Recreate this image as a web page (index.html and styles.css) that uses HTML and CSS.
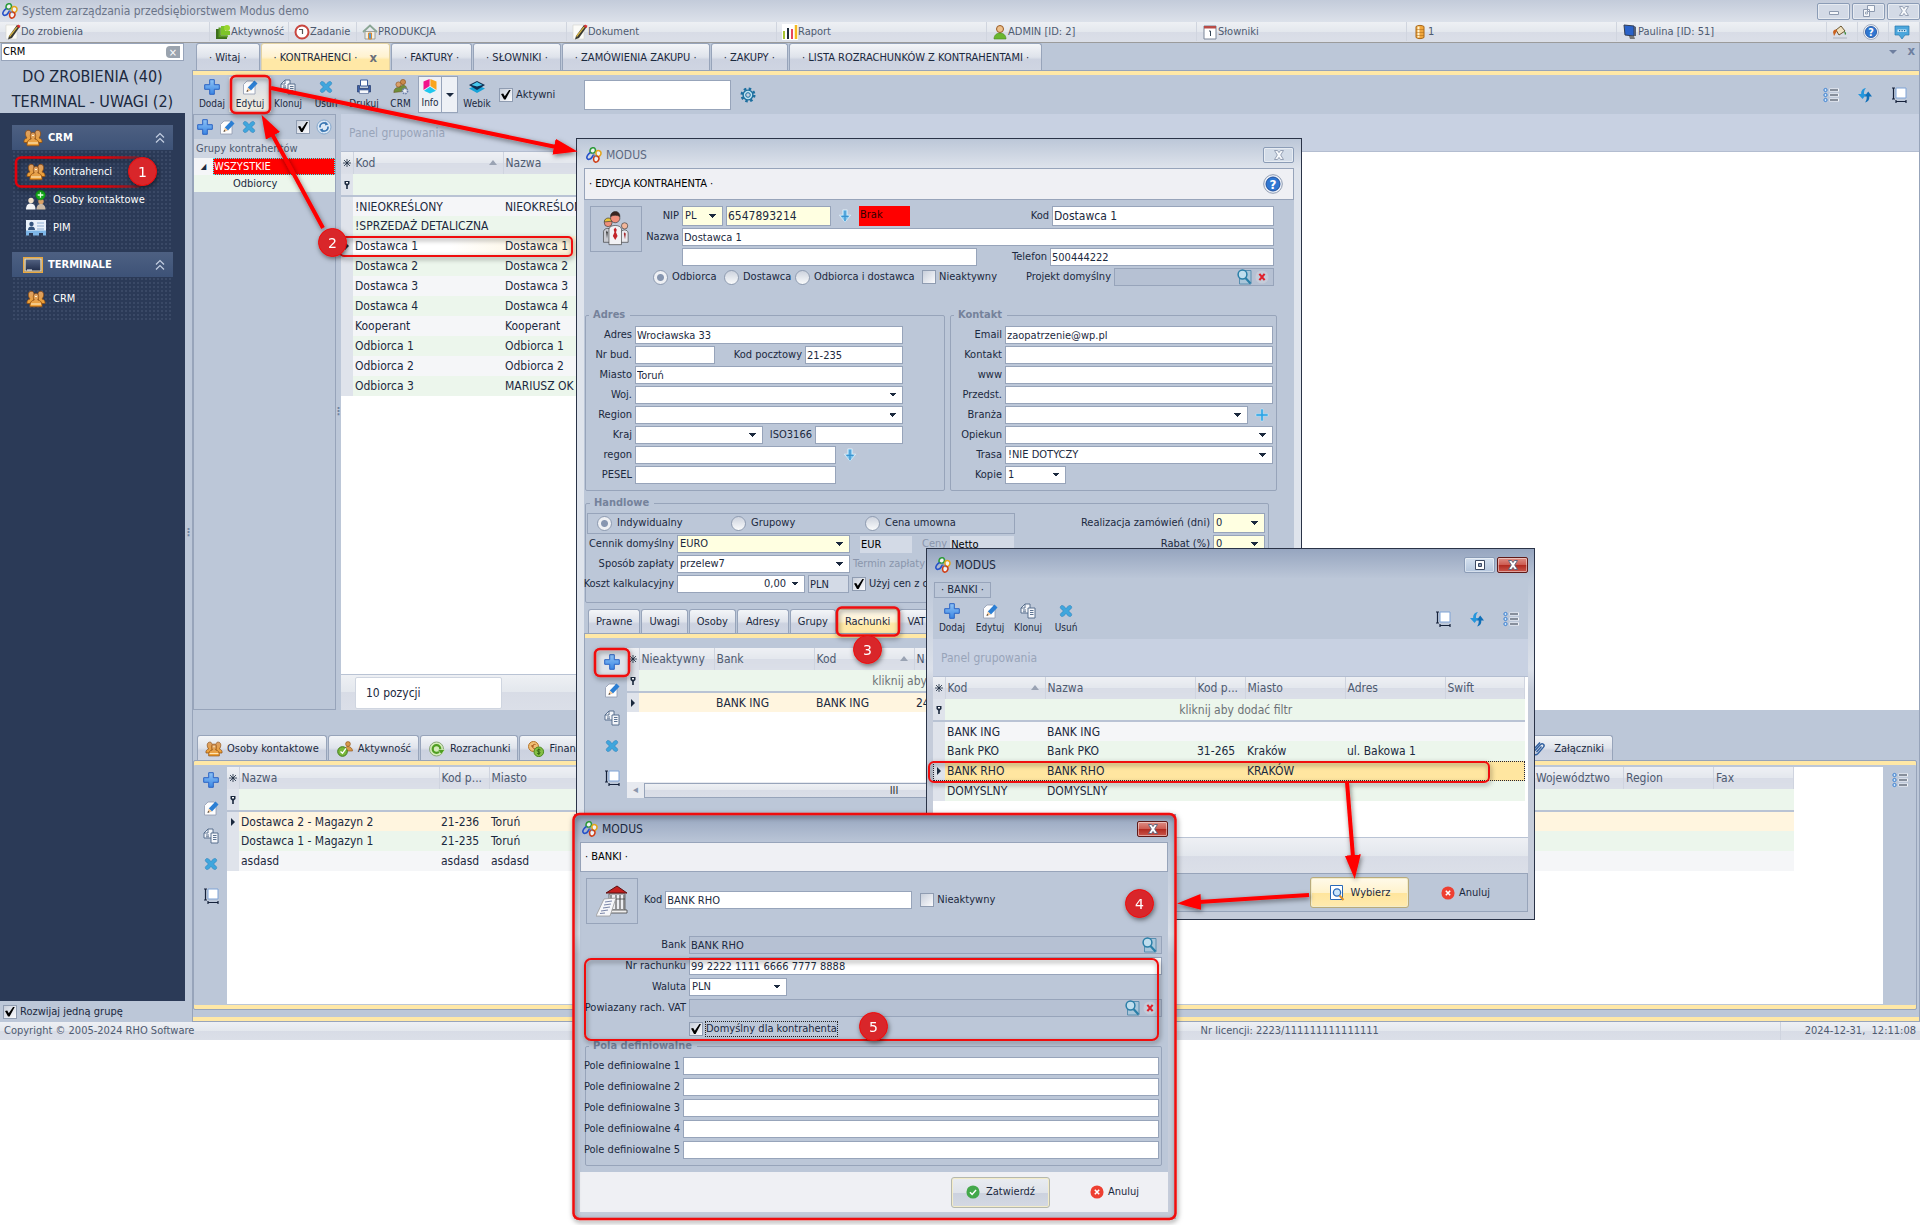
FILE: index.html
```html
<!DOCTYPE html>
<html lang="pl">
<head>
<meta charset="utf-8">
<title>System zarządzania przedsiębiorstwem Modus demo</title>
<link rel="stylesheet" href="styles.css">
</head>
<body>
<svg class="sprite" aria-hidden="true">
  <defs>
    <linearGradient id="gBlue" x1="0" y1="0" x2="0" y2="1"><stop offset="0" stop-color="#8fc3f5"/><stop offset="1" stop-color="#3a86e4"/></linearGradient>
    <linearGradient id="gOrange" x1="0" y1="0" x2="0" y2="1"><stop offset="0" stop-color="#d9a06a"/><stop offset="1" stop-color="#f0a030"/></linearGradient>
    <linearGradient id="gTerm" x1="0" y1="0" x2="0" y2="1"><stop offset="0" stop-color="#5a6a8a"/><stop offset="1" stop-color="#1b2744"/></linearGradient>
  </defs>
  <symbol id="logo" viewBox="0 0 16 16"><g fill="#f1f3f6" stroke-width="1.600"><path d="M4 3.500C4.500.5 8.500-.2 9.300 2.200S8 6.500 6.500 6.300 3.700 5 4 3.500z" stroke="#2e9b3a"/><path d="M4.500 5.500C2.500 6.500.2 9.500 1 11.300s3.500 1.200 4.800-.8L7.500 8" stroke="#2450c8" fill="none"/><path d="M10.500 4.200c1.500-1.300 4.300-.4 4.500 1.600s-1.500 4-3.200 3.600-2.600-3.900-1.300-5.200z" stroke="#e3a51c"/><path d="M8.500 9.500c1.200-1 4.300-.3 4.500 1.700s-1.600 4-3.500 3.900-2.700-4.200-1-5.600z" stroke="#cf3d16"/></g><path d="M6.500 6.500l4 3.500" stroke="#7b86a5" stroke-width="1.200"/></symbol>
  <symbol id="plus" viewBox="0 0 16 16"><path d="M5.700 .7h4.600v5h5v4.600h-5v5H5.700v-5h-5V5.700h5z" fill="url(#gBlue)" stroke="#2a63c4"/></symbol>
  <symbol id="plus2" viewBox="0 0 16 16"><path d="M6.800 2h2.400v4.800H14v2.400H9.200V14H6.800V9.200H2V6.800h4.800z" fill="#2fa5e6" stroke="#d9f1fd" stroke-width=".5"/></symbol>
  <symbol id="edit" viewBox="0 0 16 16"><path d="M5 2h6l2 2v11H1.500V5.500z" fill="#fdfdfe" stroke="#8f9bb0" stroke-width=".8"/><path d="M12.500 1.500l3 3-6.500 7-3.200-3z" fill="#2c7fd4"/><path d="M5.800 8.500 4.500 12.800 9 11.500z" fill="#f0c79a"/><path d="M4.500 12.800l.6-1.900 1.400 1.400z" fill="#222"/></symbol>
  <symbol id="copy" viewBox="0 0 16 16"><g fill="#f4f6fa" stroke="#4d6586" stroke-width=".9"><path d="M5 1h5v9H1V5z"/><path d="M8 5h7v10H8z"/></g><path d="M1 5h4V1M3 7h3M3 8.800h3M10 7.500h3.500M10 9.500h3.500M10 11.500h3.500" stroke="#4d6586" fill="none" stroke-width=".9"/></symbol>
  <symbol id="del" viewBox="0 0 16 16"><path d="M2.500 3.500c1.200-1.800 3-1.200 5.500 2 2.500-3.200 4.300-3.800 5.500-2 .9 1.400-1 2.800-3 4.500 2 1.700 3.900 3.100 3 4.500-1.200 1.800-3 1.200-5.500-2-2.500 3.200-4.300 3.800-5.500 2-.9-1.400 1-2.800 3-4.500-2-1.700-3.900-3.100-3-4.500z" fill="#3fa6dd" stroke="#2a80ba" stroke-width=".6"/></symbol>
  <symbol id="print" viewBox="0 0 16 16"><path d="M4.500 1h7v6h-7z" fill="#fff" stroke="#3a5a9a"/><path d="M1.500 6.500h2v3h9v-3h2V13h-13z" fill="#3b5fa8" stroke="#24396b" stroke-width=".7"/><path d="M3.500 11h9v3.500h-9z" fill="#f5f7fc" stroke="#5a6f96" stroke-width=".7"/></symbol>
  <symbol id="people" viewBox="0 0 20 18"><g fill="url(#gOrange)" stroke="#8c4d13" stroke-width=".8"><path d="M1 13.500c-.5-2.500 1-4 3-4.500C1.500 6 2 1.500 5 1.300S8.500 4 8 9l-1 4.500zM19 13.500c.5-2.500-1-4-3-4.500 2.500-3 2-7.500-1-7.700S11.500 4 12 9l1 4.500z"/><path d="M10 3.500c2.600 0 3.500 3 1.800 6.500 2.700.5 4.700 2.500 4.200 6.800H4c-.5-4.300 1.500-6.300 4.200-6.800C6.500 6.500 7.400 3.500 10 3.500z"/></g><path d="M9 6.500h2M5 14h10" stroke="#fff2cf" stroke-width="1"/></symbol>
  <symbol id="crm" viewBox="0 0 16 16"><circle cx="10" cy="3" r="2.600" fill="#c98a4c" stroke="#8c4d13" stroke-width=".6"/><circle cx="5.500" cy="5.500" r="2.600" fill="#d9a06a" stroke="#8c4d13" stroke-width=".6"/><path d="M.8 13.500c0-3 1.500-5 4.500-5 2 0 3-2.500 5-2.500s3.700 2 3.700 6z" fill="#6f8f3a" stroke="#6b4a1a" stroke-width=".5"/><circle cx="12" cy="12" r="2.600" fill="#e8ebf2" stroke="#6a7ea8" stroke-width="1.600" stroke-dasharray="1.500 .8"/></symbol>
  <symbol id="cube" viewBox="0 0 16 16"><path d="M7.600 1v7L1.500 12V3.500z" fill="#f0138b"/><path d="M8.400 1l6.100 2.500V12L8.400 8z" fill="#f9a51f"/><path d="M8 8.800l6 4L8 15.500l-6-2.700z" fill="#20c8ee"/></symbol>
  <symbol id="webik" viewBox="0 0 16 16"><path d="M0 9.500l8-3.500 8 3.500L8 14z" fill="#15a2d8"/><path d="M0 6l8-4 8 4-8 5z" fill="#0d2d52"/><path d="M2.500 6 8 3l5.500 3L8 7.500z" fill="#48c7ee"/></symbol>
  <symbol id="gear" viewBox="0 0 16 16"><circle cx="8" cy="8" r="6.300" fill="none" stroke="#1d6f9f" stroke-width="2.400" stroke-dasharray="2.500 2.440"/><circle cx="8" cy="8" r="4.900" fill="#bfe4f2" stroke="#1d6f9f" stroke-width="1.400"/><circle cx="8" cy="8" r="2.300" fill="#c6d0e0" stroke="#1d6f9f"/></symbol>
  <symbol id="list" viewBox="0 0 16 16"><path d="M6.500 3H16M6.500 8H16M6.500 13H16" stroke="#f4f6fa" stroke-width="2.800"/><path d="M7 3h8M7 8h8M7 13h8" stroke="#1b293e" stroke-width="1.200"/><g fill="#cfe6fb" stroke="#3b7fd0"><circle cx="2.500" cy="3" r="1.600"/><circle cx="2.500" cy="8" r="1.600"/><circle cx="2.500" cy="13" r="1.600"/></g></symbol>
  <symbol id="sync" viewBox="0 0 16 16"><path d="M9 1C5.500 1.500 4 4 4.200 7H1l4.600 5L9.500 7H7C6.800 4.500 7.500 2.500 9 1z" fill="#2596dc"/><path d="M8 15.500c3-.5 4.600-3 4.300-6H15l-3.800-5L7.500 9.500h2.200c.2 2.500-.5 4.500-1.700 6z" fill="#0f6fb8"/></symbol>
  <symbol id="fit" viewBox="0 0 16 16"><path d="M5 1h10v10H5z" fill="#fff" stroke="#7fa3d6"/><path d="M1 1h3M1 12h3M2.500 1v11M5 14.500h10M5 13v3M15 13v3" stroke="#15213a" fill="none" stroke-width="1.200"/></symbol>
  <symbol id="pencil" viewBox="0 0 16 16"><path d="M1 1h11v14H1z" fill="#fbfbf8" stroke="#d4d3cc" stroke-width=".6"/><path d="M12 1l3 1.500L7 14l-4 1.500L4 12z" fill="#3a3a32"/><path d="M13 .5l2.500 1.200L14.500 4l-2.700-1.400z" fill="#d33"/><path d="M4 12l7.500-9.300 1.200.6L5 13z" fill="#d8b646"/></symbol>
  <symbol id="act" viewBox="0 0 16 16"><path d="M6 2h4v5h5v4H6z" fill="#7cc42a"/><path d="M1 5h3v7h8v3H1z" fill="#3d6f1c"/><path d="M3.500 3.500h2.300v7.700h7v2H3.500z" fill="#5a9a24"/><circle cx="12" cy="4" r="3" fill="#9ad62e"/></symbol>
  <symbol id="clock" viewBox="0 0 16 16"><circle cx="8" cy="8" r="6.500" fill="#fff" stroke="#c9463f" stroke-width="2"/><path d="M5 5.500h3.500V10" fill="none" stroke="#555" stroke-width="1.200"/></symbol>
  <symbol id="house" viewBox="0 0 16 16"><path d="M3 7.500h10V15H3z" fill="#f2efe4" stroke="#8b8f88" stroke-width=".8"/><path d="M1 8l7-6.500L15 8" fill="none" stroke="#8aa694" stroke-width="1.800"/><path d="M6.500 9h3v6h-3z" fill="#4f9bd8" stroke="#e08a2e"/></symbol>
  <symbol id="chart" viewBox="0 0 16 16"><path d="M0 0h16v16H0z" fill="#fff"/><path d="M2 7v8" stroke="#a8c432" stroke-width="2"/><path d="M6 4v11" stroke="#1f2d3a" stroke-width="2"/><path d="M10 5v10" stroke="#e7455c" stroke-width="2"/><path d="M14 1v14" stroke="#f4b91e" stroke-width="2.500"/></symbol>
  <symbol id="user" viewBox="0 0 16 16"><circle cx="8" cy="5" r="3.500" fill="#edc08b" stroke="#9a5a24"/><path d="M2 15c0-4 3-6 6-6s6 2 6 6z" fill="#69b62f" stroke="#4a8a1e" stroke-width=".6"/></symbol>
  <symbol id="cal" viewBox="0 0 16 16"><path d="M2 2h12v13H2z" fill="#fff" stroke="#7c8799"/><path d="M2 2h12v2.500H2z" fill="#b84b46"/><path d="M7 7h1.500v5" stroke="#345" fill="none"/></symbol>
  <symbol id="db" viewBox="0 0 16 16"><path d="M4 2.500c2-1.500 6-1.500 8 0v11c-2 1.500-6 1.500-8 0z" fill="#f0a63c" stroke="#a9681a"/><path d="M6.500 2.500v11" stroke="#fff3cf" stroke-width="2"/><path d="M4 5.500h8M4 8.500h8M4 11.500h8" stroke="#a9681a" stroke-width=".5"/></symbol>
  <symbol id="monitor" viewBox="0 0 16 16"><path d="M2 1l10 1v10L3 11z" fill="#2a62c9" stroke="#333d52"/><path d="M12 2l2 1v9l-2 0z" fill="#555f75"/><path d="M7 12h5l1 3H8z" fill="#777"/></symbol>
  <symbol id="paint" viewBox="0 0 16 16"><path d="M4 6l5-4 4 5-6 4z" fill="#efe1c1" stroke="#6a5530"/><path d="M1 8c1-3 4-3 4-1l-3 5z" fill="#c9621f"/><path d="M12 7c2 1 3 3 1 4z" fill="#3a8a3a"/><path d="M1 13h14v2H1z" fill="#c3c8d2"/></symbol>
  <symbol id="help" viewBox="0 0 20 20"><circle cx="10" cy="10" r="9.300" fill="#eef2f8" stroke="#8e9ab0"/><circle cx="10" cy="10" r="7" fill="#2f77d1" stroke="#1f4f9e"/><text x="10" y="14.500" text-anchor="middle" class="qmark">?</text></symbol>
  <symbol id="chat" viewBox="0 0 16 16"><path d="M1 2h14v9h-4l-3 4-3-4H1z" fill="#4ba6dc" stroke="#2a7ab0" stroke-width=".7"/><path d="M3.500 5.500h9v2.500h-9z" fill="#cfe9f8"/><path d="M5 6.700h1.200M7.500 6.700h1.200M10 6.700h1.200" stroke="#1c5d8c" stroke-width="1.300"/></symbol>
  <symbol id="term" viewBox="0 0 20 16"><path d="M.7.7h18.600v14.600H.7z" fill="url(#gTerm)" stroke="#e9a83e" stroke-width="1.400"/><path d="M2 2h16v12H2z" fill="none" stroke="#fbe9c0" stroke-width="1.200"/><path d="M4 13h5" stroke="#fff"/></symbol>
  <symbol id="contact" viewBox="0 0 20 20"><circle cx="5" cy="10.500" r="2.700" fill="#f3e1c8"/><path d="M0 19.500c0-4.500 2-6 5-6s4.500 2 4.500 6z" fill="#f2f3f5"/><circle cx="15" cy="11.500" r="2.700" fill="#d9a066"/><path d="M10.500 19.500c0-4 2-5.500 4.500-5.500s4.500 2 4.500 5.500z" fill="#c9b9a6"/><circle cx="14.500" cy="5" r="4.800" fill="#12a818" stroke="#0c7a1b" stroke-width=".6"/><path d="M14.500 2.200v5.600M11.700 5h5.600" stroke="#e6ffe2" stroke-width="1.300"/></symbol>
  <symbol id="card" viewBox="0 0 20 16"><path d="M0 0h20v12H0z" fill="#e9f1fa"/><path d="M0 10.500h20v5h-3v-2.500h-4v2.500H7v-2.500H3v2.500H0z" fill="#7db6e8"/><circle cx="5.500" cy="4" r="2.200" fill="#35557e"/><path d="M2 10c0-2.500 1.500-3.500 3.500-3.500s3.500 1 3.500 3.500z" fill="#35557e"/><path d="M11 3h7M11 6h7M11 9h7" stroke="#8fb0d4"/></symbol>
  <symbol id="chev" viewBox="0 0 10 12"><path d="M1 5.500l4-4 4 4M1 10.500l4-4 4 4" fill="none" stroke="#c4cfe2" stroke-width="1.200"/></symbol>
  <symbol id="ok" viewBox="0 0 16 16"><circle cx="8" cy="8" r="7.500" fill="#43a84a"/><path d="M4.500 8.200l2.500 2.500 4.500-5" fill="none" stroke="#fff" stroke-width="1.600"/></symbol>
  <symbol id="cancel" viewBox="0 0 16 16"><circle cx="8" cy="8" r="7.500" fill="#ee3f31"/><path d="M5.500 5.500l5 5M10.500 5.500l-5 5" stroke="#fff" stroke-width="1.800"/></symbol>
  <symbol id="find" viewBox="0 0 16 16"><path d="M5 1.500h10V15H3.500V9" fill="#a9c6da" stroke="#5a8fb0"/><circle cx="6.500" cy="5.500" r="4.400" fill="#c4e3f2" fill-opacity=".8" stroke="#2a7fa8" stroke-width="1.500"/><path d="M9.500 9l5 5.500" stroke="#2a7fa8" stroke-width="2.200"/></symbol>
  <symbol id="pick" viewBox="0 0 16 16"><path d="M1.500.5h12v14h-12z" fill="#fff" stroke="#2869b8"/><circle cx="8" cy="7.500" r="3.600" fill="#cbe6fb" stroke="#2869b8" stroke-width="1.300"/><path d="M10.500 10.500l4 4.500" stroke="#e0912a" stroke-width="2"/></symbol>
  <symbol id="redx" viewBox="0 0 16 16"><circle cx="8" cy="8" r="7.500" fill="#c5ccd9"/><path d="M5 4.500l6 7M11 4.500l-6 7" stroke="#e0202a" stroke-width="2.400"/></symbol>
  <symbol id="clip" viewBox="0 0 16 16"><path d="M4 9.500l5.500-6c2-2 4.800.4 3 2.600L7 12.500c-3 3-7.500-.5-4.500-4L9 1.500" fill="none" stroke="#2f5f9f" stroke-width="1.400"/><path d="M5.500 11l5-5.500" stroke="#2f5f9f" stroke-width="1.300"/></symbol>
  <symbol id="rozr" viewBox="0 0 16 16"><circle cx="7.500" cy="8" r="7" fill="#d4ecb9" stroke="#8aa77b"/><circle cx="7.500" cy="8" r="3.800" fill="none" stroke="#4f9e22" stroke-width="2.200"/><path d="M8.500 8.500H16l-3.700 5z" fill="#4f9e22" stroke="#e7f5d8" stroke-width=".6"/></symbol>
  <symbol id="fin" viewBox="0 0 16 16"><circle cx="5.500" cy="5.500" r="5" fill="#f0be74" stroke="#b5742a"/><path d="M7.500 3.500c-4-1-4 5 0 4M3 5h3" fill="none" stroke="#a5541a"/><circle cx="10.800" cy="10.800" r="4.800" fill="#85bf45" stroke="#4b8a1f"/><path d="M12.500 9c-4-1.500-4 1.500-1.800 1.800s2 2.600-1.600 1.700M10.800 7.500v6.600" fill="none" stroke="#2d5c10" stroke-width=".9"/></symbol>
  <symbol id="aktyw" viewBox="0 0 16 16"><circle cx="11" cy="3" r="2.400" fill="#d99a4c" stroke="#8c4d13" stroke-width=".6"/><path d="M7 10c0-3 2-4.500 4-4.500s4.500 1.500 4.500 4.500z" fill="#d99a4c" stroke="#8c4d13" stroke-width=".6"/><circle cx="5.500" cy="10.500" r="4.800" fill="#79b83a" stroke="#3f7a18"/><path d="M3.500 10.500l2 1.800 3.500-5" fill="none" stroke="#fff" stroke-width="1.400"/></symbol>
  <symbol id="down" viewBox="0 0 14 16"><path d="M4.500 1h5v6H13.500L7 15 .5 7h4z" fill="#7cc4ee" stroke="#e9f6fd" stroke-width=".8"/><path d="M7 2v12M3 8.500h8" stroke="#3a93cf" stroke-width="1.400"/></symbol>
  <symbol id="refresh" viewBox="0 0 16 16"><circle cx="8" cy="8" r="7" fill="#dce9f6" stroke="#86a9cd"/><path d="M4 8.500a4 4 0 0 1 6.500-3.700M12 7.500a4 4 0 0 1-6.500 3.700" fill="none" stroke="#3b78b4" stroke-width="1.600"/><path d="M9.500 2.500l3 3-3.500 1zM6.500 13.500l-3-3 3.500-1z" fill="#3b78b4"/></symbol>
  <symbol id="trio" viewBox="0 0 32 46"><g stroke="#333" stroke-width=".8"><circle cx="6" cy="15" r="5" fill="#f08f7c"/><path d="M1 14c0-6 9-7 10-1z" fill="#e8c63a"/><path d="M0 40V26c1-5 10-5 11 0v14z" fill="#c9cbd2"/><circle cx="27" cy="19" r="4" fill="#f2b79c"/><path d="M22 40V28c1-5 9-5 9.500 0v12z" fill="#e9e9ee"/><circle cx="15" cy="9" r="6" fill="#f08f7c"/><path d="M9 7c0-8 12-9 12 0-4-2-8-2-12 0z" fill="#3a2420"/><path d="M7 43V23c1-6 15-6 16 0v20z" fill="#f2f2f5"/></g><path d="M15 21l2 3-1 3 2 5-3 5-3-5 2-5-1-3z" fill="#c3242a"/><path d="M4 25l1.500 2-1 8-1-8z" fill="#333"/><path d="M27 27l1.500 2-1 7-1.500-7z" fill="#a32a2e"/></symbol>
  <symbol id="bank" viewBox="0 0 32 32"><path d="M13 9h16v16H13z" fill="#eceef2" stroke="#555" stroke-width=".8"/><path d="M10 8 21 1l10 7z" fill="#c4201f" stroke="#5c1010"/><path d="M15 10v14M20 10v14M24 10v14M28 10v14" stroke="#666" stroke-width="1.300"/><path d="M13 14h16M11 25h20v3H11z" stroke="#444" fill="#eee" stroke-width=".8"/><path d="M8 14l12-1-6 18H0z" fill="#f6f7fa" stroke="#999" stroke-width=".8"/><path d="M9 17l7-1M8 20l7-1M7 23l7-1M5 26l7-1M4 28.500l5-.5" stroke="#7b86a8" stroke-width="1.100"/></symbol>
  <symbol id="wx" viewBox="0 0 12 12"><path d="M1.500 1.500h3L6 3.600l1.500-2.100h3L7.700 6l2.800 4.500h-3L6 8.400l-1.500 2.100h-3L4.300 6z" fill="#fff" stroke="#51607a" stroke-width=".9"/></symbol>
  <symbol id="wxoff" viewBox="0 0 12 12"><path d="M1.500 1.500h3L6 3.600l1.500-2.100h3L7.700 6l2.800 4.500h-3L6 8.400l-1.500 2.100h-3L4.300 6z" fill="#f6f8fb" stroke="#8c99ae" stroke-width=".9"/></symbol>
  <symbol id="wmin" viewBox="0 0 12 12"><path d="M1.500 6.500h9v3h-9z" fill="#f6f8fb" stroke="#8c99ae"/></symbol>
  <symbol id="wmax" viewBox="0 0 12 12"><path d="M1.500 1.500h9v9h-9z" fill="#fff" stroke="#3c4a63"/><path d="M4.500 4.500h3v3h-3z" fill="#8fa0bb" stroke="#3c4a63"/></symbol>
  <symbol id="wres" viewBox="0 0 12 12"><path d="M4.500.5h7v6h-7zM.5 4.500h6v7h-6z" fill="#f6f8fb" stroke="#8c99ae"/><path d="M2.500 7h2v2h-2z" fill="none" stroke="#8c99ae" stroke-width=".8"/></symbol>
  <symbol id="star" viewBox="0 0 8 8"><path d="M4 0v8M0 4h8M1 1l6 6M7 1 1 7" stroke="#1b293e" stroke-width=".8"/></symbol>
  <symbol id="pin" viewBox="0 0 8 8"><path d="M1.500 0h5v3L4.800 4.500V8H3.200V4.500L1.500 3z" fill="#1b293e"/><path d="M3 1h2v1.500H3z" fill="#fff"/></symbol>
  <symbol id="cur" viewBox="0 0 8 8"><path d="M2 0l4 4-4 4z" fill="#1b293e"/></symbol>
  <symbol id="sort" viewBox="0 0 8 5"><path d="M4 0l4 5H0z" fill="#9aa3b3"/></symbol>
</svg>

<div class="app">
  <header class="titlebar">
    <svg class="i16"><use href="#logo"/></svg><h1>System zarządzania przedsiębiorstwem Modus demo</h1>
    <div class="winbtns">
      <button class="wb wide" aria-label="Minimalizuj"><svg class="i12"><use href="#wmin"/></svg></button>
      <button class="wb wide" aria-label="Przywróć"><svg class="i12"><use href="#wres"/></svg></button>
      <button class="wb wide" aria-label="Zamknij"><svg class="i12"><use href="#wxoff"/></svg></button>
    </div>
  </header>
  <nav class="menubar">
    <a href="#" class="m-grow"><svg class="i16"><use href="#pencil"/></svg>Do zrobienia</a>
    <a href="#" class="m-79"><svg class="i16"><use href="#act"/></svg>Aktywność</a>
    <a href="#" class="m-68"><svg class="i16"><use href="#clock"/></svg>Zadanie</a>
    <a href="#" class="m-grow"><svg class="i16"><use href="#house"/></svg>PRODUKCJA</a>
    <a href="#" class="m-grow"><svg class="i16"><use href="#pencil"/></svg>Dokument</a>
    <a href="#" class="m-grow"><svg class="i16"><use href="#chart"/></svg>Raport</a>
    <a href="#" class="m-grow"><svg class="i16"><use href="#user"/></svg>ADMIN [ID: 2]</a>
    <a href="#" class="m-grow"><svg class="i16"><use href="#cal"/></svg>Słowniki</a>
    <a href="#" class="m-grow"><svg class="i16"><use href="#db"/></svg>1</a>
    <a href="#" class="m-grow"><svg class="i16"><use href="#monitor"/></svg>Paulina [ID: 51]</a>
    <a href="#" class="m-30" aria-label="Skórka"><svg class="i16"><use href="#paint"/></svg></a>
    <a href="#" class="m-30" aria-label="Pomoc"><svg class="i16"><use href="#help"/></svg></a>
    <a href="#" class="m-30" aria-label="Wiadomości"><svg class="i16"><use href="#chat"/></svg></a>
  </nav>

  <div class="shell">
    <aside class="side">
      <div class="searchbox"><input type="text" value="CRM" aria-label="Szukaj"><button aria-label="Wyczyść">×</button></div>
      <a href="#" class="todo">DO ZROBIENIA (40)</a>
      <a href="#" class="todo">TERMINAL - UWAGI (2)</a>
      <nav class="navpanel">
        <section>
          <h2><svg class="i20"><use href="#people"/></svg>CRM<svg class="chev"><use href="#chev"/></svg></h2>
          <ul>
            <li><a href="#"><svg class="i20"><use href="#people"/></svg>Kontrahenci</a></li>
            <li><a href="#"><svg class="i20"><use href="#contact"/></svg>Osoby kontaktowe</a></li>
            <li><a href="#"><svg class="i20"><use href="#card"/></svg>PIM</a></li>
          </ul>
        </section>
        <section>
          <h2><svg class="i20"><use href="#term"/></svg>TERMINALE<svg class="chev"><use href="#chev"/></svg></h2>
          <ul>
            <li><a href="#"><svg class="i20"><use href="#people"/></svg>CRM</a></li>
          </ul>
        </section>
      </nav>
      <label class="chk sidechk"><input type="checkbox" checked>Rozwijaj jedną grupę</label>
    </aside>
    <div class="vsplit">⋮</div>

    <main class="work">
      <div class="tabs maintabs">
        <button class="tab">· Witaj ·</button>
        <button class="tab on">· KONTRAHENCI ·<b>x</b></button>
        <button class="tab">· FAKTURY ·</button>
        <button class="tab">· SŁOWNIKI ·</button>
        <button class="tab">· ZAMÓWIENIA ZAKUPU ·</button>
        <button class="tab">· ZAKUPY ·</button>
        <button class="tab">· LISTA ROZRACHUNKÓW Z KONTRAHENTAMI ·</button>
        <span class="tabctl"><i></i><b>x</b></span>
      </div>
      <div class="page">
        <div class="toolbar">
          <button class="tool"><svg class="i16"><use href="#plus"/></svg>Dodaj</button>
          <button class="tool hot"><svg class="i16"><use href="#edit"/></svg>Edytuj</button>
          <button class="tool"><svg class="i16"><use href="#copy"/></svg>Klonuj</button>
          <button class="tool"><svg class="i16"><use href="#del"/></svg>Usuń</button>
          <button class="tool"><svg class="i16"><use href="#print"/></svg>Drukuj</button>
          <button class="tool narrow"><svg class="i16"><use href="#crm"/></svg>CRM</button>
          <div class="infobox"><button class="tool"><svg class="i16"><use href="#cube"/></svg>Info</button><button class="drop" aria-label="Więcej"><i></i></button></div>
          <button class="tool"><svg class="i16"><use href="#webik"/></svg>Webik</button>
          <label class="chk"><input type="checkbox" checked>Aktywni</label>
          <input class="quick" type="text" aria-label="Szukaj na liście">
          <button class="ico" aria-label="Ustawienia"><svg class="i16"><use href="#gear"/></svg></button>
          <span class="tools-r">
            <button class="ico" aria-label="Widok"><svg class="i16"><use href="#list"/></svg></button>
            <button class="ico" aria-label="Odśwież"><svg class="i16"><use href="#sync"/></svg></button>
            <button class="ico" aria-label="Dopasuj"><svg class="i16"><use href="#fit"/></svg></button>
          </span>
        </div>
        <div class="upper">
          <div class="tree">
            <div class="treebar">
              <button class="ico" aria-label="Dodaj grupę"><svg class="i16"><use href="#plus"/></svg></button>
              <button class="ico" aria-label="Edytuj grupę"><svg class="i16"><use href="#edit"/></svg></button>
              <button class="ico" aria-label="Usuń grupę"><svg class="i16"><use href="#del"/></svg></button>
              <label class="chk push"><input type="checkbox" checked aria-label="Pokaż grupy"></label>
              <button class="ico" aria-label="Odśwież grupy"><svg class="i16"><use href="#refresh"/></svg></button>
            </div>
            <div class="treehead">Grupy kontrahentów</div>
            <ul class="treelist"><li class="root"><i>◢</i><span>WSZYSTKIE</span></li><li class="leaf">Odbiorcy</li></ul>
          </div>
          <div class="vsplit slim">⋮</div>
          <div class="gridbox">
            <div class="grouppanel">Panel grupowania</div>
            <div class="gridwrap">
              <table class="grid t-main">
                <colgroup><col class="c12"><col class="c150"><col></colgroup>
                <thead>
                  <tr><th><svg class="i8"><use href="#star"/></svg></th><th>Kod<svg class="sort"><use href="#sort"/></svg></th><th>Nazwa</th></tr>
                  <tr class="filter"><td><svg class="i8"><use href="#pin"/></svg></td><td colspan="2"></td></tr>
                </thead>
                <tbody>
                  <tr><td></td><td>!NIEOKREŚLONY</td><td>NIEOKREŚLONY</td></tr>
                  <tr><td></td><td>!SPRZEDAŻ DETALICZNA</td><td></td></tr>
                  <tr class="cursel"><td><svg class="i8"><use href="#cur"/></svg></td><td>Dostawca 1</td><td>Dostawca 1</td></tr>
                  <tr><td></td><td>Dostawca 2</td><td>Dostawca 2</td></tr>
                  <tr><td></td><td>Dostawca 3</td><td>Dostawca 3</td></tr>
                  <tr><td></td><td>Dostawca 4</td><td>Dostawca 4</td></tr>
                  <tr><td></td><td>Kooperant</td><td>Kooperant</td></tr>
                  <tr><td></td><td>Odbiorca 1</td><td>Odbiorca 1</td></tr>
                  <tr><td></td><td>Odbiorca 2</td><td>Odbiorca 2</td></tr>
                  <tr><td></td><td>Odbiorca 3</td><td>MARIUSZ OK</td></tr>
                </tbody>
              </table>
            </div>
            <div class="gridfoot t-main"><output>10 pozycji</output></div>
          </div>
        </div>
        <div class="lower">
          <div class="tabs lowtabs">
            <button class="tab"><svg class="i18"><use href="#people"/></svg>Osoby kontaktowe</button>
            <button class="tab"><svg class="i18"><use href="#aktyw"/></svg>Aktywność</button>
            <button class="tab"><svg class="i18"><use href="#rozr"/></svg>Rozrachunki</button>
            <button class="tab"><svg class="i18"><use href="#fin"/></svg>Finanse</button>
            <button class="tab last"><svg class="i18"><use href="#clip"/></svg>Załączniki</button>
          </div>
          <div class="lowpane">
            <div class="vtools">
              <button class="ico" aria-label="Dodaj"><svg class="i16"><use href="#plus"/></svg></button>
              <button class="ico" aria-label="Edytuj"><svg class="i16"><use href="#edit"/></svg></button>
              <button class="ico" aria-label="Klonuj"><svg class="i16"><use href="#copy"/></svg></button>
              <button class="ico" aria-label="Usuń"><svg class="i16"><use href="#del"/></svg></button>
              <button class="ico" aria-label="Dopasuj"><svg class="i16"><use href="#fit"/></svg></button>
            </div>
            <div class="gridwrap">
              <table class="grid t-low">
                <colgroup><col class="c12"><col class="c200"><col class="c50"><col><col class="c90"><col class="c90"><col class="c80"></colgroup>
                <thead>
                  <tr><th><svg class="i8"><use href="#star"/></svg></th><th>Nazwa</th><th>Kod p...</th><th>Miasto</th><th>Województwo</th><th>Region</th><th>Fax</th></tr>
                  <tr class="filter"><td><svg class="i8"><use href="#pin"/></svg></td><td colspan="6"></td></tr>
                </thead>
                <tbody>
                  <tr class="cur"><td><svg class="i8"><use href="#cur"/></svg></td><td>Dostawca 2 - Magazyn 2</td><td>21-236</td><td>Toruń</td><td></td><td></td><td></td></tr>
                  <tr><td></td><td>Dostawca 1 - Magazyn 1</td><td>21-235</td><td>Toruń</td><td></td><td></td><td></td></tr>
                  <tr><td></td><td>asdasd</td><td>asdasd</td><td>asdasd</td><td></td><td></td><td></td></tr>
                </tbody>
              </table>
            </div>
            <div class="vtools"><button class="ico" aria-label="Widok"><svg class="i16"><use href="#list"/></svg></button></div>
          </div>
        </div>
      </div>
    </main>
  </div>
  <footer class="status"><span>Copyright © 2005-2024 RHO Software</span><span>Nr licencji: 2223/111111111111111</span><span class="when">2024-12-31,&nbsp; 12:11:08</span></footer>
</div>

<section class="win w-edit">
  <header class="wtitle"><svg class="i16"><use href="#logo"/></svg>MODUS<span class="winbtns"><button class="wb" aria-label="Zamknij"><svg class="i12"><use href="#wxoff"/></svg></button></span></header>
  <div class="whead"><span>· EDYCJA KONTRAHENTA ·</span><button class="ico" aria-label="Pomoc"><svg class="i20"><use href="#help"/></svg></button></div>
  <form class="wbody">
    <div class="idblock">
      <div class="pic"><svg class="trio"><use href="#trio"/></svg></div>
      <div class="rows">
        <div class="row tall"><label class="lb w38" for="nip">NIP</label><select class="w41 yl" aria-label="Kraj NIP"><option>PL</option></select><input id="nip" class="w104 yl big" type="text" value="6547893214"><button type="button" class="ico mid" aria-label="Pobierz dane"><svg class="i14"><use href="#down"/></svg></button><span class="brak">Brak</span><label class="lb push" for="kod">Kod</label><input id="kod" class="w222 big" type="text" value="Dostawca 1"></div>
        <div class="row"><label class="lb w38" for="nazwa">Nazwa</label><input id="nazwa" class="fill" type="text" value="Dostawca 1"></div>
        <div class="row"><span class="lb w38"></span><input class="w294" type="text" aria-label="Nazwa cd."><label class="lb push" for="tel">Telefon</label><input id="tel" class="w224" type="text" value="500444222"></div>
        <div class="row kinds"><label class="rad w71"><input type="radio" name="typ" checked>Odbiorca</label><label class="rad w71"><input type="radio" name="typ">Dostawca</label><label class="rad w126"><input type="radio" name="typ">Odbiorca i dostawca</label><label class="chk"><input type="checkbox">Nieaktywny</label><label class="lb push" for="proj">Projekt domyślny</label><span class="lookup w160"><input id="proj" type="text" readonly><svg class="i16"><use href="#find"/></svg><svg class="i14"><use href="#redx"/></svg></span></div>
      </div>
    </div>
    <div class="pair">
      <fieldset class="f-adr"><legend>Adres</legend>
        <div class="row"><label class="lb w46" for="a1">Adres</label><input id="a1" class="fill" type="text" value="Wrocławska 33"></div>
        <div class="row"><label class="lb w46" for="a2">Nr bud.</label><input id="a2" class="w80" type="text"><label class="lb push" for="a3">Kod pocztowy</label><input id="a3" class="w98" type="text" value="21-235"></div>
        <div class="row"><label class="lb w46" for="a4">Miasto</label><input id="a4" class="fill" type="text" value="Toruń"></div>
        <div class="row"><label class="lb w46" for="a5">Woj.</label><select id="a5" class="fill"><option></option></select></div>
        <div class="row"><label class="lb w46" for="a6">Region</label><select id="a6" class="fill"><option></option></select></div>
        <div class="row"><label class="lb w46" for="a7">Kraj</label><select id="a7" class="w128"><option></option></select><label class="lb push" for="a8">ISO3166</label><input id="a8" class="w88" type="text"></div>
        <div class="row"><label class="lb w46" for="a9">regon</label><input id="a9" class="w201" type="text"><button type="button" class="ico mid" aria-label="Pobierz z REGON"><svg class="i14"><use href="#down"/></svg></button></div>
        <div class="row"><label class="lb w46" for="a10">PESEL</label><input id="a10" class="w201" type="text"></div>
      </fieldset>
      <fieldset class="f-kon"><legend>Kontakt</legend>
        <div class="row"><label class="lb w51" for="k1">Email</label><input id="k1" class="fill" type="text" value="zaopatrzenie@wp.pl"></div>
        <div class="row"><label class="lb w51" for="k2">Kontakt</label><input id="k2" class="fill" type="text"></div>
        <div class="row"><label class="lb w51" for="k3">www</label><input id="k3" class="fill" type="text"></div>
        <div class="row"><label class="lb w51" for="k4">Przedst.</label><input id="k4" class="fill" type="text"></div>
        <div class="row"><label class="lb w51" for="k5">Branża</label><select id="k5" class="fill"><option></option></select><button type="button" class="ico w22" aria-label="Dodaj branżę"><svg class="i16"><use href="#plus2"/></svg></button></div>
        <div class="row"><label class="lb w51" for="k6">Opiekun</label><select id="k6" class="fill"><option></option></select></div>
        <div class="row"><label class="lb w51" for="k7">Trasa</label><select id="k7" class="fill"><option>!NIE DOTYCZY</option></select></div>
        <div class="row"><label class="lb w51" for="k8">Kopie</label><select id="k8" class="w61"><option>1</option></select></div>
      </fieldset>
    </div>
    <fieldset class="f-han"><legend>Handlowe</legend>
      <div class="row tall"><div class="radbox"><label class="rad"><input type="radio" name="cena" checked>Indywidualny</label><label class="rad"><input type="radio" name="cena">Grupowy</label><label class="rad"><input type="radio" name="cena">Cena umowna</label></div><label class="lb push" for="h1">Realizacja zamówień (dni)</label><select id="h1" class="w52 yl"><option>0</option></select></div>
      <div class="row"><label class="lb w87" for="h2">Cennik domyślny</label><select id="h2" class="w173 yl"><option>EURO</option></select><output class="ro w52 gapl">EUR</output><span class="dim gapl">Ceny</span><output class="ro w64">Netto</output><label class="lb push" for="h3">Rabat (%)</label><select id="h3" class="w52 yl"><option>0</option></select></div>
      <div class="row"><label class="lb w87" for="h4">Sposób zapłaty</label><select id="h4" class="w173"><option>przelew7</option></select><span class="dim">Termin zapłaty</span></div>
      <div class="row"><label class="lb w87" for="h5">Koszt kalkulacyjny</label><select id="h5" class="w128 rt"><option>0,00</option></select><input class="w41 gr" type="text" value="PLN" readonly aria-label="Waluta kosztu"><label class="chk"><input type="checkbox" checked>Użyj cen z c</label></div>
    </fieldset>
    <div class="tabs subtabs">
      <button type="button" class="tab">Prawne</button><button type="button" class="tab">Uwagi</button><button type="button" class="tab">Osoby</button><button type="button" class="tab">Adresy</button><button type="button" class="tab">Grupy</button><button type="button" class="tab on">Rachunki</button><button type="button" class="tab">VAT</button>
    </div>
    <div class="subpane">
      <div class="vtools wide">
        <button type="button" class="ico addhot" aria-label="Dodaj rachunek"><svg class="i16"><use href="#plus"/></svg></button>
        <button type="button" class="ico" aria-label="Edytuj rachunek"><svg class="i16"><use href="#edit"/></svg></button>
        <button type="button" class="ico" aria-label="Klonuj rachunek"><svg class="i16"><use href="#copy"/></svg></button>
        <button type="button" class="ico" aria-label="Usuń rachunek"><svg class="i16"><use href="#del"/></svg></button>
        <button type="button" class="ico" aria-label="Dopasuj"><svg class="i16"><use href="#fit"/></svg></button>
      </div>
      <div class="subgrid">
        <div class="gridwrap">
          <table class="grid t-acc">
            <colgroup><col class="c12"><col class="c75"><col class="c100"><col class="c100"><col></colgroup>
            <thead>
              <tr><th><svg class="i8"><use href="#star"/></svg></th><th>Nieaktywny</th><th>Bank</th><th>Kod<svg class="sort"><use href="#sort"/></svg></th><th>N</th></tr>
              <tr class="filter"><td><svg class="i8"><use href="#pin"/></svg></td><td colspan="4">kliknij aby dodać filtr</td></tr>
            </thead>
            <tbody><tr class="cur"><td><svg class="i8"><use href="#cur"/></svg></td><td></td><td>BANK ING</td><td>BANK ING</td><td>24</td></tr></tbody>
          </table>
        </div>
        <div class="hscroll"><span>◂</span><div class="thumb">III</div></div>
      </div>
    </div>
  </form>
</section>

<section class="win active w-pick">
  <header class="wtitle"><svg class="i16"><use href="#logo"/></svg>MODUS<span class="winbtns"><button class="wb" aria-label="Maksymalizuj"><svg class="i12"><use href="#wmax"/></svg></button><button class="wb red" aria-label="Zamknij"><svg class="i12"><use href="#wx"/></svg></button></span></header>
  <div class="wbody pickbody">
    <span class="chip">· BANKI ·</span>
    <div class="toolbar">
      <button class="tool"><svg class="i16"><use href="#plus"/></svg>Dodaj</button>
      <button class="tool"><svg class="i16"><use href="#edit"/></svg>Edytuj</button>
      <button class="tool"><svg class="i16"><use href="#copy"/></svg>Klonuj</button>
      <button class="tool"><svg class="i16"><use href="#del"/></svg>Usuń</button>
      <span class="tools-r">
        <button class="ico" aria-label="Dopasuj"><svg class="i16"><use href="#fit"/></svg></button>
        <button class="ico" aria-label="Odśwież"><svg class="i16"><use href="#sync"/></svg></button>
        <button class="ico" aria-label="Widok"><svg class="i16"><use href="#list"/></svg></button>
      </span>
    </div>
    <div class="grouppanel">Panel grupowania</div>
    <div class="gridwrap">
      <table class="grid t-bank">
        <colgroup><col class="c12"><col class="c100"><col class="c150"><col class="c50"><col class="c100"><col class="c100"><col></colgroup>
        <thead>
          <tr><th><svg class="i8"><use href="#star"/></svg></th><th>Kod<svg class="sort"><use href="#sort"/></svg></th><th>Nazwa</th><th>Kod p...</th><th>Miasto</th><th>Adres</th><th>Swift</th></tr>
          <tr class="filter"><td><svg class="i8"><use href="#pin"/></svg></td><td colspan="6">kliknij aby dodać filtr</td></tr>
        </thead>
        <tbody>
          <tr><td></td><td>BANK ING</td><td>BANK ING</td><td></td><td></td><td></td><td></td></tr>
          <tr><td></td><td>Bank PKO</td><td>Bank PKO</td><td>31-265</td><td>Kraków</td><td>ul. Bakowa 1</td><td></td></tr>
          <tr class="sel"><td><svg class="i8"><use href="#cur"/></svg></td><td>BANK RHO</td><td>BANK RHO</td><td></td><td>KRAKÓW</td><td></td><td></td></tr>
          <tr><td></td><td>DOMYSLNY</td><td>DOMYSLNY</td><td></td><td></td><td></td><td></td></tr>
        </tbody>
      </table>
    </div>
    <div class="gridfoot"></div>
    <div class="actions"><button class="btn gold"><svg class="i16"><use href="#pick"/></svg>Wybierz</button><button class="btn flat"><svg class="i14"><use href="#cancel"/></svg>Anuluj</button></div>
  </div>
</section>

<section class="win active w-bank">
  <header class="wtitle"><svg class="i16"><use href="#logo"/></svg>MODUS<span class="winbtns"><button class="wb red" aria-label="Zamknij"><svg class="i12"><use href="#wx"/></svg></button></span></header>
  <div class="whead"><span>· BANKI ·</span></div>
  <form class="wbody">
    <div class="bankid">
      <div class="pic"><svg class="bankpic"><use href="#bank"/></svg></div>
      <div class="row"><label class="lb" for="b1">Kod</label><input id="b1" class="w247" type="text" value="BANK RHO"><label class="chk"><input type="checkbox">Nieaktywny</label></div>
    </div>
    <div class="rows21">
      <div class="row"><label class="lb w104" for="b2">Bank</label><span class="lookup fill"><input id="b2" type="text" value="BANK RHO" readonly><svg class="i16"><use href="#find"/></svg></span></div>
      <div class="row"><label class="lb w104" for="b3">Nr rachunku</label><input id="b3" class="fill" type="text" value="99 2222 1111 6666 7777 8888"></div>
      <div class="row"><label class="lb w104" for="b4">Waluta</label><select id="b4" class="w98"><option>PLN</option></select></div>
      <div class="row"><label class="lb w104" for="b5">Powiazany rach. VAT</label><span class="lookup fill"><input id="b5" type="text" readonly><svg class="i16"><use href="#find"/></svg><svg class="i14"><use href="#redx"/></svg></span></div>
      <div class="row"><span class="lb w104"></span><label class="chk focus"><input type="checkbox" checked><span>Domyślny dla kontrahenta</span></label></div>
    </div>
    <fieldset class="f-def"><legend>Pola definiowalne</legend>
      <div class="row"><label class="lb w94" for="p1">Pole definiowalne 1</label><input id="p1" class="fill" type="text"></div>
      <div class="row"><label class="lb w94" for="p2">Pole definiowalne 2</label><input id="p2" class="fill" type="text"></div>
      <div class="row"><label class="lb w94" for="p3">Pole definiowalne 3</label><input id="p3" class="fill" type="text"></div>
      <div class="row"><label class="lb w94" for="p4">Pole definiowalne 4</label><input id="p4" class="fill" type="text"></div>
      <div class="row"><label class="lb w94" for="p5">Pole definiowalne 5</label><input id="p5" class="fill" type="text"></div>
    </fieldset>
  </form>
  <div class="wfoot"><button class="btn"><svg class="i14"><use href="#ok"/></svg>Zatwierdź</button><button class="btn flat"><svg class="i14"><use href="#cancel"/></svg>Anuluj</button></div>
</section>

<!-- tutorial callouts: frames, arrows and step numbers -->
<svg class="notes" width="1920" height="1225">
  <defs>
    <filter id="sh" x="-20%" y="-20%" width="140%" height="150%"><feDropShadow dx="1" dy="2" stdDeviation="2.500" flood-color="#000" flood-opacity=".5"/></filter>
    <marker id="ah" markerUnits="userSpaceOnUse" markerWidth="24" markerHeight="18" refX="2" refY="8" orient="auto"><path d="M0 0l24 8-24 8z" fill="#f00"/></marker>
    <linearGradient id="fade" x1="0" x2="1"><stop offset="0" stop-color="#e00008"/><stop offset=".7" stop-color="#e00008"/><stop offset="1" stop-color="#e00008" stop-opacity=".3"/></linearGradient>
  </defs>
  <g fill="none" stroke="#f00a0a" stroke-width="2.500" filter="url(#sh)">
    <rect x="16" y="157.500" width="126" height="29" rx="5" stroke="url(#fade)"/>
    <rect x="231" y="76" width="39" height="37" rx="5"/>
    <rect x="340" y="237" width="232" height="19" rx="4" stroke-width="2"/>
    <rect x="837" y="607.500" width="62" height="28" rx="5"/>
    <rect x="595" y="649" width="34" height="27" rx="5"/>
    <rect x="929" y="762" width="560" height="20" rx="5" stroke-width="2"/>
    <rect x="573.500" y="814" width="602" height="405" rx="6" stroke-width="2.500"/>
    <rect x="585" y="959" width="573" height="81" rx="6" stroke-width="2"/>
  </g>
  <g stroke="#f00" stroke-width="4" filter="url(#sh)">
    <path d="M271 88 556 147" marker-end="url(#ah)"/>
    <path d="M323 228 272 134" marker-end="url(#ah)"/>
    <path d="M1347 782 1353 857" marker-end="url(#ah)"/>
    <path d="M1309 895 1199 902" marker-end="url(#ah)"/>
  </g>
  <g class="steps" filter="url(#sh)">
    <circle cx="142.500" cy="171.500" r="14"/><text x="142.500" y="177">1</text>
    <circle cx="332.500" cy="242.500" r="14"/><text x="332.500" y="248">2</text>
    <circle cx="867.500" cy="649.500" r="14"/><text x="867.500" y="655">3</text>
    <circle cx="1139.500" cy="903.500" r="14"/><text x="1139.500" y="909">4</text>
    <circle cx="873.500" cy="1026.500" r="14"/><text x="873.500" y="1032">5</text>
  </g>
</svg>
</body>
</html>
```
FILE: styles.css
```css
:root {
  --bg: #bcc7d8;
  --line: #97a4ba;
  --ink: #1b293e;
  --dim: #4e5a70;
  --gold: #ffe8a6;
  --metal: linear-gradient(#eef0f4 0, #e3e7ed 50%, #d8dce6 50%, #dbdfe8 100%);
}
* { box-sizing: border-box; }
body {
  margin: 0;
  position: relative;
  min-height: 100vh;
  background: #fff;
  color: var(--ink);
  font: 11px/14px "DejaVu Sans Condensed", "Noto Sans", sans-serif;
}
h1, h2, ul { margin: 0; padding: 0; font: inherit; list-style: none; }
a { color: inherit; text-decoration: none; }
button { margin: 0; padding: 0; border: 0; background: none; font: inherit; color: inherit; white-space: nowrap; }
svg { display: block; flex: none; }
.sprite { position: absolute; width: 0; height: 0; }
.i8 { width: 8px; height: 8px; }
.i12 { width: 12px; height: 12px; }
.i14 { width: 14px; height: 14px; }
.i16 { width: 16px; height: 16px; }
.i18 { width: 18px; height: 16px; }
.i20 { width: 20px; height: 20px; }
.qmark { font: bold 12px "DejaVu Sans", sans-serif; fill: #fff; }
.push { margin-left: auto; }
.fill { flex: 1; min-width: 0; }

/* application frame */
.app { display: flex; flex-direction: column; height: calc(100vh - 185px); min-width: 1600px; background: var(--bg); }
.titlebar { display: flex; align-items: center; gap: 4px; height: 22px; padding-left: 2px; background: linear-gradient(#c3cbda, #dce1ea); color: #6a7488; font-size: 12px; }
.winbtns { display: flex; gap: 2px; margin-left: auto; }
.wb { display: flex; align-items: center; justify-content: center; width: 31px; height: 16px; border: 1px solid #8b9cb6; border-radius: 2px; background: linear-gradient(#d5e1ef, #b4c6dd); box-shadow: inset 0 0 0 1px rgba(255,255,255,.45); }
.wb.wide { width: 33px; height: 17px; background: #d3dae6; }
.wb.red { border-color: #5f1a18; background: linear-gradient(#dd8e85 0, #cc5a50 50%, #b0281e 50%, #c9574c 100%); }
.menubar { display: flex; height: 21px; padding-bottom: 1px; border-bottom: 1px solid #9b9b9b; background: var(--metal); color: var(--dim); }
.menubar a { display: flex; align-items: center; padding-left: 5px; border-right: 1px solid #d0d5df; white-space: nowrap; }
.m-grow { flex: 1; }
.m-79 { width: 79px; }
.m-68 { width: 68px; }
.m-30 { width: 31px; }

/* side navigation */
.shell { flex: 1; display: flex; min-height: 0; }
.side { display: flex; flex-direction: column; width: 185px; }
.searchbox { display: flex; align-items: center; height: 18px; margin: 0 1px 2px; border: 1px solid var(--line); background: #fff; }
.searchbox input { flex: 1; min-width: 0; border: 0; padding: 0 1px; font: inherit; }
.searchbox button { width: 14px; height: 12px; margin-right: 3px; background: #9aa3ae; color: #fff; line-height: 11px; border-radius: 4px 0 0 4px; }
.todo { height: 25px; font-size: 16px; line-height: 27px; text-align: center; white-space: nowrap; }
.navpanel { flex: 1; padding: 12px; background: #2b3a57; color: #fff; }
.navpanel section + section { margin-top: 2px; }
.navpanel h2 { display: flex; align-items: center; gap: 5px; height: 25px; padding: 0 8px 0 11px; background: linear-gradient(#4d6082, #3d5277); font-weight: bold; }
.chev { width: 10px; height: 12px; margin-left: auto; }
.navpanel ul { padding: 8px 0; background: radial-gradient(#3a4966 1px, transparent 1px) 0 0/4px 4px; }
.navpanel li { height: 28px; }
.navpanel li a { display: flex; align-items: center; gap: 7px; height: 28px; padding-left: 14px; }
.sidechk { height: 21px; padding-left: 3px; }
.vsplit { display: flex; align-items: center; justify-content: center; width: 7px; color: #7383a0; font-weight: bold; }
.slim { width: 5px; }
.work { flex: 1; display: flex; flex-direction: column; min-width: 0; border-right: 1px solid var(--line); }

/* tabs and toolbars */
.tabs { display: flex; gap: 1px; }
.tab { display: flex; align-items: center; justify-content: center; border: 1px solid var(--line); border-bottom: 0; border-radius: 3px 3px 0 0; background: linear-gradient(#f3f5f8 0, #dfe3eb 50%, #ccd2e0 60%, #cfd5e2 100%); }
.tab.on { background: linear-gradient(#fffaee, #fff2cf 50%, var(--gold) 60%); border-color: #e3d3a4; }
.tab b { color: #6b6f7b; font-size: 13px; margin-left: 12px; }
.maintabs { height: 27px; padding-left: 4px; }
.maintabs .tab { padding: 1px 12px 0; }
.tabctl { display: flex; gap: 10px; margin: 0 4px 0 auto; color: #6e7f9f; font-size: 13px; line-height: 16px; }
.tabctl i { margin-top: 7px; border: 4px solid transparent; border-top-color: #6e7f9f; }
.page { flex: 1; display: flex; flex-direction: column; min-height: 0; border: 1px solid var(--line); border-right: 0; border-top: 0; box-shadow: inset 0 1px var(--line), inset 0 5px var(--gold), inset 0 -4px var(--gold); padding: 5px 0 11px; }
.toolbar { display: flex; align-items: center; height: 39px; }
.tool { display: flex; flex-direction: column; align-items: center; gap: 2px; width: 38px; font-size: 10px; line-height: 13px; }
.tool.narrow { width: 35px; }
.tool.hot { background: linear-gradient(#d6dbe5, #f3efe2); box-shadow: 0 0 0 2px #e4e4e0; }
.infobox { display: flex; height: 37px; border: 1px solid var(--line); background: #eef1f6; }
.infobox .tool { width: 22px; padding-top: 1px; }
.drop { width: 16px; border-left: 1px solid var(--line); display: flex; align-items: center; justify-content: center; }
.drop i { margin-top: 4px; border: 4px solid transparent; border-top-color: var(--ink); }
.ico { display: flex; align-items: center; justify-content: center; min-width: 16px; height: 16px; }
.toolbar .chk { margin-left: 3px; width: 85px; }
.quick { width: 147px; height: 30px; margin-right: 9px; border: 1px solid var(--line); background: #fff; }
.tools-r { display: flex; gap: 18px; margin: 0 12px 0 auto; }
.chk { display: flex; align-items: center; gap: 3px; white-space: nowrap; }
.chk input { appearance: none; flex: none; width: 14px; height: 14px; margin: 0; border: 1px solid #8f9cb1; background: linear-gradient(135deg, #c8cfdb, #fbfbfd); display: grid; place-items: center; }
.chk input:checked::before { content: ""; width: 10px; height: 10px; background: #000; clip-path: polygon(0 45%, 22% 40%, 38% 68%, 84% 0, 100% 0, 46% 100%, 30% 100%); }
.rad { display: flex; align-items: center; gap: 5px; white-space: nowrap; }
.rad input { appearance: none; flex: none; width: 15px; height: 15px; margin: 0; border: 1px solid #8f9cb1; border-radius: 50%; background: linear-gradient(#cdd3de, #fafbfc); }
.rad input:checked { background: radial-gradient(circle, #8796b0 0 3px, #eef0f4 4px); }

/* grids */
.upper { flex: 1; display: flex; min-height: 0; }
.tree { width: 143px; border: 1px solid var(--line); }
.treebar { display: flex; align-items: center; gap: 6px; height: 24px; padding: 0 3px; }
.treehead { height: 19px; padding-left: 2px; line-height: 19px; background: #cfd6e2; color: var(--dim); white-space: nowrap; }
.treelist li { display: flex; height: 17px; line-height: 17px; }
.root { background: #f5f6f8; color: #fff; }
.root i { width: 19px; font-size: 8px; text-align: center; font-style: normal; color: var(--ink); }
.root span { flex: 1; padding-left: 1px; background: #f00; outline: 1px dotted #3ff; outline-offset: -1px; }
.leaf { padding-left: 39px; background: #ecf6ec; }
.gridbox { flex: 1; display: flex; flex-direction: column; min-width: 0; background: #fff; }
.grouppanel { height: 38px; padding: 0 8px; line-height: 38px; font-size: 12px; color: #98a4b9; background: #c8d1e2; border-bottom: 1px solid #b3bdd0; }
.gridwrap { flex: 1; min-height: 0; overflow: hidden; background: #fff; }
.grid { table-layout: fixed; border-collapse: collapse; font-size: 12px; line-height: 14px; white-space: nowrap; }
.grid th, .grid td { height: 20px; padding: 0 0 0 2px; overflow: hidden; text-align: left; font-weight: normal; }
.grid th { height: 22px; background: var(--metal); color: var(--dim); border-right: 1px solid #cfd4df; }
.grid td:first-child { background: #dfe3eb; }
.grid tbody tr { background: #f5f6f8; }
.grid tbody tr:nth-child(even) { background: #ecf6ec; }
.grid tbody tr.cur { background: #fff5df; }
.grid tbody tr.sel { background: #ffe6a0; outline: 1px dotted #223; outline-offset: -1px; }
.grid tbody tr.cursel { background: linear-gradient(90deg, #fff 12%, #fdf0d4 26%); }
.filter td { height: 22px; border-bottom: 2px solid #b9c3d4; background: #ecf6ec; color: #6d7276; }
.grid .filter td + td { text-align: center; }
.sort { float: right; width: 8px; height: 5px; margin: 4px 6px 0 0; }
.c12 { width: 12px; } .c50 { width: 50px; } .c75 { width: 75px; } .c80 { width: 80px; } .c90 { width: 90px; }
.c100 { width: 100px; } .c150 { width: 150px; } .c200 { width: 200px; }
.t-main { width: 900px; }
.t-low { width: 1567px; }
.t-acc { width: 590px; }
.t-bank { width: 592px; }
.gridfoot { display: flex; align-items: center; height: 36px; padding-left: 14px; border-top: 1px solid #b9c3d4; background: var(--metal); }
.gridfoot output { width: 147px; padding: 8px 10px; border: 1px solid #cfd5e0; border-radius: 2px; background: #fff; font-size: 12px; }

.lower { display: flex; flex-direction: column; height: 300px; padding-top: 25px; }
.lowtabs { height: 25px; padding-left: 4px; }
.lowtabs .tab { gap: 4px; padding: 1px 7px 0; }
.lowtabs .last { margin: 0 306px 0 auto; padding: 1px 8px 0; gap: 6px; }
.lowpane { flex: 1; display: flex; min-height: 0; margin-right: 2px; padding: 6px 0 5px; border: 1px solid var(--line); border-radius: 2px; box-shadow: inset 0 4px var(--gold), inset 0 -4px var(--gold); }
.vtools { display: flex; flex-direction: column; align-items: center; gap: 12px; width: 33px; padding-top: 5px; }
.vtools .ico:nth-child(5) { margin-top: 4px; }
.status { display: grid; grid-template-columns: 62fr 30fr auto; height: 18px; padding: 0 4px; line-height: 18px; background: var(--metal); color: var(--dim); }
.when { padding-left: 24px; border-left: 1px solid #cfd4df; }

/* windows */
.win { position: absolute; display: flex; flex-direction: column; padding: 0 7px 7px; border: 1px solid #2a3347; background: linear-gradient(#bcc7d8, #dfe4ec 30px); }
.win.active { background: linear-gradient(#96a5bf, #bcc7d8 30px, #dce1ea 120px, #c5ccda 140px); }
.w-edit { left: 576px; top: 138px; width: 726px; height: 700px; }
.w-pick { left: 926px; top: 548px; width: 609px; height: 372px; padding: 0 6px 7px; }
.w-bank { left: 574px; top: 814px; width: 602px; height: 405px; padding: 0 8px 7px 6px; border: 0; }
.wtitle { display: flex; align-items: center; gap: 4px; height: 29px; flex: none; font-size: 12px; padding-top: 2px; }
.wtitle > svg { margin-left: 2px; }
.w-edit .wtitle { color: #5d6980; }
.w-edit .wb { background: #d3dce8; }
.whead { display: flex; align-items: center; justify-content: space-between; height: 32px; flex: none; padding: 0 10px 0 4px; border: 1px solid var(--line); background: #eff0f4; color: #000; }
.w-bank .wtitle { height: 28px; }
.w-bank .whead { height: 30px; }
.wbody { flex: 1; min-height: 0; display: flex; flex-direction: column; background: var(--bg); }
.idblock { display: flex; padding: 6px 20px 22px 6px; }
.pic { display: flex; align-items: center; justify-content: center; flex: none; width: 52px; height: 46px; border: 1px solid var(--line); }
.trio { width: 32px; height: 36px; }
.bankpic { width: 32px; height: 32px; }
.rows { flex: 1; display: flex; flex-direction: column; gap: 2px; }
.row { display: flex; align-items: center; gap: 3px; height: 18px; }
.row.tall { height: 20px; }
.row + .row { margin-top: 2px; }
.rows .row + .row { margin-top: 0; }
.lb { display: flex; justify-content: flex-end; white-space: nowrap; flex: none; }
.row > input, .row > select, .lookup input { height: 18px; padding: 0 1px; border: 1px solid var(--line); border-radius: 0; background-color: #fff; color: inherit; font: inherit; }
.tall > input, .tall > select { height: 20px; }
.row > input.big { font-size: 12px; }
.row > select { appearance: none; padding: 0 0 0 2px; background-image: linear-gradient(to bottom left, var(--ink) 50%, transparent 50%), linear-gradient(to bottom right, var(--ink) 50%, transparent 50%); background-size: 4px 4px; background-position: right 9px center, right 5px center; background-repeat: no-repeat; }
.row > .yl { background-color: #ffffe1; }
.row > .gr { background-color: #d3dae6; }
.row > .rt { padding-right: 18px; text-align: right; text-align-last: right; }
.brak { width: 51px; height: 20px; padding-left: 1px; line-height: 18px; background: #f00; color: #300; }
.mid { margin: 0 3px; }
.kinds { padding-left: 11px; }
.kinds .rad { gap: 4px; margin-right: -3px; }
.kinds .w126 { margin-right: 0; }
.lookup { display: flex; align-items: center; gap: 3px; height: 18px; padding-right: 4px; border: 1px solid var(--line); background: #b6c1d3; }
.lookup input { flex: 1; min-width: 0; height: 16px; border: 0; background: none; }
.dim { color: #8a96ac; white-space: nowrap; }
.ro { height: 17px; padding-left: 1px; line-height: 17px; background: #d3dae6; color: #000; }
.row > .gapl { margin-left: 7px; }
.w22 { width: 22px; } .w38 { width: 37px; } .w41 { width: 41px; } .w46 { width: 46px; } .w51 { width: 51px; } .w52 { width: 52px; }
.w61 { width: 61px; } .w64 { width: 64px; } .w71 { width: 71px; } .w80 { width: 80px; } .w87 { width: 87px; } .w88 { width: 88px; }
.w94 { width: 94px; } .w98 { width: 98px; } .w104 { width: 105px; } .w126 { width: 124px; } .w128 { width: 128px; } .w160 { width: 160px; }
.w173 { width: 173px; } .w201 { width: 201px; } .w222 { width: 222px; } .w224 { width: 224px; } .w247 { width: 247px; } .w294 { width: 295px; }
fieldset { min-width: 0; margin: 0; padding: 4px 3px 6px 0; border: 1px solid var(--line); border-radius: 2px; }
legend { height: 14px; margin-left: 3px; padding: 0 5px 0 4px; color: #75829b; font-weight: bold; }
.pair { display: flex; gap: 5px; padding: 0 17px 0 1px; }
.f-adr { width: 360px; padding-right: 41px; }
.f-kon { flex: 1; }
.f-han { margin: 5px 25px 0 1px; padding: 3px 3px 9px 1px; }
.radbox { display: flex; align-items: center; width: 428px; height: 21px; padding-left: 9px; border: 1px solid var(--line); }
.radbox .rad { width: 134px; }
.subtabs { height: 24px; margin: 6px 0 0 4px; gap: 1px; }
.subtabs .tab { padding: 1px 7px 0; }
.subtabs .tab:nth-child(4) { padding: 1px 8px 0; }
.subpane { flex: 1; display: flex; padding-top: 15px; border-left: 1px solid var(--line); background: linear-gradient(var(--line) 1px, var(--gold) 1px 5px, transparent 5px); }
.vtools.wide { width: 42px; padding-left: 11px; padding-top: 1px; }
.addhot { flex: none; width: 32px; height: 26px; margin-bottom: -5px; background: #dfe3ea; }
.subgrid { flex: 1; min-width: 0; display: flex; flex-direction: column; height: 150px; background: #fff; }
.hscroll { display: flex; align-items: center; height: 16px; background: #e7eaf0; color: #8a96ac; overflow: hidden; }
.hscroll span { width: 17px; text-align: center; }
.thumb { flex: none; width: 500px; height: 15px; border: 1px solid var(--line); background: var(--metal); text-align: center; line-height: 13px; color: #333; }

.chip { align-self: flex-start; margin: 4px 0 0 1px; padding: 0 6px; border: 1px solid var(--line); }
.pickbody .toolbar { height: 41px; }
.pickbody .tools-r { gap: 18px; margin-right: 9px; }
.actions, .wfoot { display: flex; align-items: center; justify-content: flex-end; gap: 12px; height: 39px; flex: none; padding-right: 17px; }
.actions { border: 1px solid var(--line); }
.wfoot { height: 40px; gap: 20px; padding-right: 9px; background: #eff0f4; }
.btn { display: flex; align-items: center; justify-content: center; gap: 6px; width: 99px; height: 31px; border: 1px solid #b5b8ae; border-radius: 3px; background: linear-gradient(#e9ecf1 0, #dfe3ea 50%, #cbd1de 50%, #d4d9e3 100%); box-shadow: inset 0 0 0 1px #f3ecc9; }
.btn.gold { background: linear-gradient(#fffaea 0, #fff2cc 50%, #ffe59c 50%, #ffeaaf 100%); border-color: #b9ab7c; }
.btn.flat { width: 89px; gap: 4px; border: 0; background: none; box-shadow: none; }
.bankid { display: flex; gap: 6px; padding: 6px 6px 12px; }
.bankid .row { margin-top: 13px; }
.bankid .chk { margin-left: 5px; }
.rows21 { display: flex; flex-direction: column; gap: 3px; padding: 0 6px 0 1px; }
.rows21 .row + .row, .f-def .row + .row { margin-top: 0; }
.focus span { outline: 1px dotted #222; }
.f-def { display: flex; flex-direction: column; gap: 3px; margin: 1px 6px 0 5px; padding-right: 2px; }

/* callouts */
.notes { position: absolute; left: 0; top: 0; pointer-events: none; }
.steps circle { fill: #d9282c; stroke: #f00a0a; }
.steps text { fill: #fff; font: 14px "DejaVu Sans", sans-serif; text-anchor: middle; }
```
